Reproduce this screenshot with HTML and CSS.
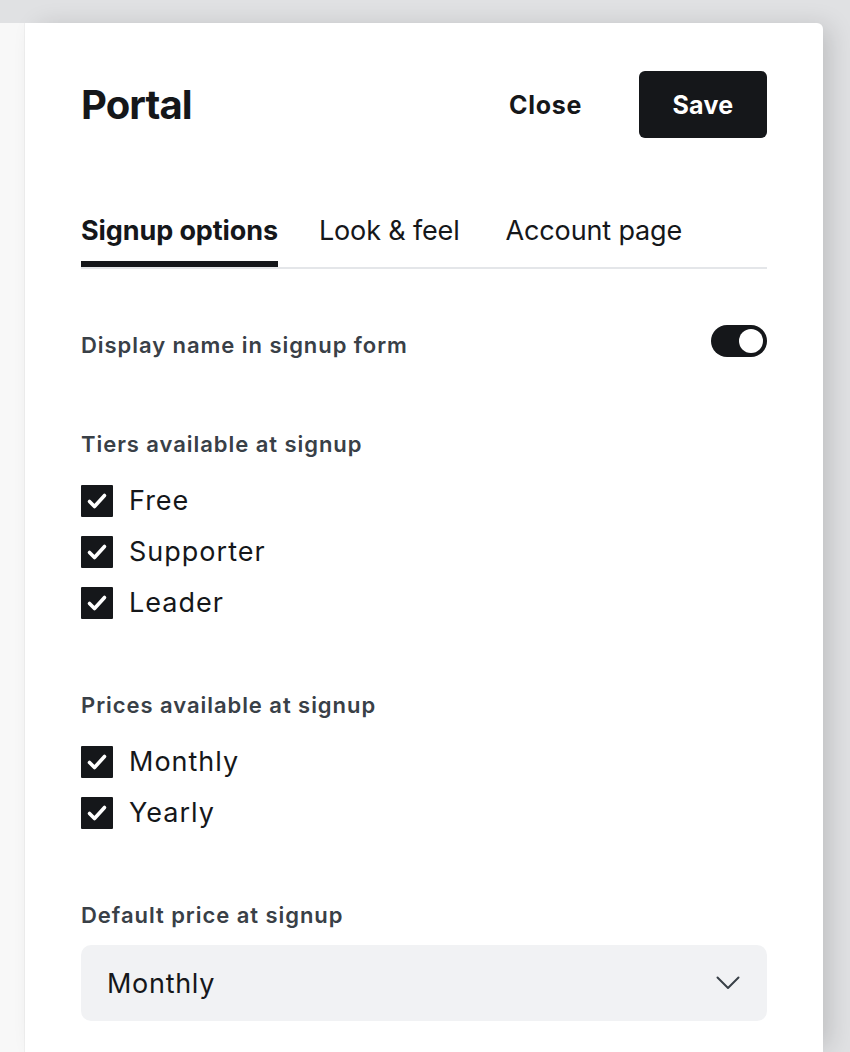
FILE: index.html
```html
<!DOCTYPE html>
<html lang="en">
<head>
<meta charset="utf-8">
<title>Portal</title>
<link rel="stylesheet" href="styles.css">
</head>
<body>
<div class="backdrop">
  <div class="side"></div>
  <div class="panel">
    <header class="head">
      <h1 class="title">Portal</h1>
      <div class="actions">
        <button class="btn-close">Close</button>
        <button class="btn-save">Save</button>
      </div>
    </header>

    <nav class="tabs">
      <span class="tab active">Signup options</span>
      <span class="tab">Look &amp; feel</span>
      <span class="tab">Account page</span>
    </nav>

    <section class="toggle-row">
      <span class="label">Display name in signup form</span>
      <span class="toggle"><span class="knob"></span></span>
    </section>

    <section class="group tiers">
      <div class="label">Tiers available at signup</div>
      <ul class="checks">
        <li class="check"><span class="box"><svg viewBox="0 0 32 32" width="32" height="32"><polyline points="8.5,16.5 13.5,21.5 23.5,10.5" fill="none" stroke="#fff" stroke-width="3.6" stroke-linecap="round" stroke-linejoin="round"/></svg></span>Free</li>
        <li class="check"><span class="box"><svg viewBox="0 0 32 32" width="32" height="32"><polyline points="8.5,16.5 13.5,21.5 23.5,10.5" fill="none" stroke="#fff" stroke-width="3.6" stroke-linecap="round" stroke-linejoin="round"/></svg></span>Supporter</li>
        <li class="check"><span class="box"><svg viewBox="0 0 32 32" width="32" height="32"><polyline points="8.5,16.5 13.5,21.5 23.5,10.5" fill="none" stroke="#fff" stroke-width="3.6" stroke-linecap="round" stroke-linejoin="round"/></svg></span>Leader</li>
      </ul>
    </section>

    <section class="group">
      <div class="label">Prices available at signup</div>
      <ul class="checks">
        <li class="check"><span class="box"><svg viewBox="0 0 32 32" width="32" height="32"><polyline points="8.5,16.5 13.5,21.5 23.5,10.5" fill="none" stroke="#fff" stroke-width="3.6" stroke-linecap="round" stroke-linejoin="round"/></svg></span>Monthly</li>
        <li class="check"><span class="box"><svg viewBox="0 0 32 32" width="32" height="32"><polyline points="8.5,16.5 13.5,21.5 23.5,10.5" fill="none" stroke="#fff" stroke-width="3.6" stroke-linecap="round" stroke-linejoin="round"/></svg></span>Yearly</li>
      </ul>
    </section>

    <section class="group">
      <div class="label">Default price at signup</div>
      <div class="select">
        <span>Monthly</span>
        <svg class="chev" viewBox="0 0 24 14" width="24" height="14"><polyline points="1.5,1.5 12,12 22.5,1.5" fill="none" stroke="#394047" stroke-width="2" stroke-linecap="round" stroke-linejoin="round"/></svg>
      </div>
    </section>
  </div>
</div>
</body>
</html>
```

FILE: styles.css
```css
* { box-sizing: border-box; }

html, body {
  margin: 0;
  padding: 0;
}

body {
  background: #e0e1e3;
  font-family: Inter, "Noto Sans", "Liberation Sans", sans-serif;
  color: #15171a;
  height: 1052px;
  overflow: hidden;
}

.backdrop {
  display: flex;
  padding-top: 23px;
  height: 1052px;
}

.side {
  width: 25px;
  flex: none;
  background: #f8f8f8;
  border-right: 1px solid #f0f0f0;
}

.panel {
  width: 798px;
  flex: none;
  background: #fff;
  border-top-right-radius: 6px;
  padding: 48px 56px 0 56px;
  box-shadow: 10px 0 26px -4px rgba(0, 0, 0, 0.16);
  position: relative;
}

.head {
  display: flex;
  align-items: center;
  justify-content: space-between;
  height: 67px;
}

.title {
  margin: 0;
  font-size: 40px;
  font-weight: 700;
  line-height: 48px;
  letter-spacing: -0.9px;
}

.actions {
  display: flex;
  align-items: center;
}

.btn-close {
  background: none;
  border: 0;
  padding: 0;
  margin-right: 57px;
  font-family: inherit;
  font-size: 25px;
  font-weight: 700;
  letter-spacing: 0.7px;
  color: #15171a;
}

.btn-save {
  width: 128px;
  height: 67px;
  border: 0;
  border-radius: 6px;
  background: #15171a;
  color: #fff;
  font-family: inherit;
  font-size: 25px;
  font-weight: 700;
  letter-spacing: 0.3px;
}

.tabs {
  margin-top: 76px;
  display: flex;
  border-bottom: 2px solid #e4e6e9;
}

.tab {
  font-size: 27px;
  line-height: 34px;
  padding-bottom: 13px;
  border-bottom: 6px solid transparent;
  color: #15171a;
  letter-spacing: -0.15px;
  margin-right: 46px;
}

.tab.active {
  font-weight: 700;
  letter-spacing: -0.1px;
  border-bottom-color: #15171a;
  margin-right: 41px;
}

.label {
  font-size: 22px;
  line-height: 32px;
  font-weight: 600;
  letter-spacing: 0.95px;
  color: #394047;
}

.toggle-row {
  margin-top: 56px;
  display: flex;
  justify-content: space-between;
  align-items: flex-start;
}

.toggle-row .label {
  margin-top: 4px;
}

.toggle {
  width: 56px;
  height: 32px;
  border-radius: 16px;
  background: #15171a;
  display: flex;
  align-items: center;
  justify-content: flex-end;
  padding-right: 4px;
}

.knob {
  width: 24px;
  height: 24px;
  border-radius: 50%;
  background: #fff;
}

.group {
  margin-top: 70px;
}

.group.tiers {
  margin-top: 67px;
}

.checks {
  list-style: none;
  margin: 25px 0 0 0;
  padding: 0;
  display: flex;
  flex-direction: column;
  gap: 19px;
}

.check {
  display: flex;
  align-items: center;
  height: 32px;
  font-size: 27px;
  line-height: 32px;
  letter-spacing: 1px;
  color: #15171a;
}

.box {
  width: 32px;
  height: 32px;
  background: #15171a;
  border-radius: 1px;
  margin-right: 16px;
  display: flex;
}

.select {
  margin-top: 14px;
  height: 76px;
  border-radius: 10px;
  background: #f1f2f4;
  padding: 0 26px;
  display: flex;
  align-items: center;
  justify-content: space-between;
  font-size: 27px;
  letter-spacing: 0.7px;
  color: #15171a;
}

.chev {
  margin-right: 1px;
}
```
